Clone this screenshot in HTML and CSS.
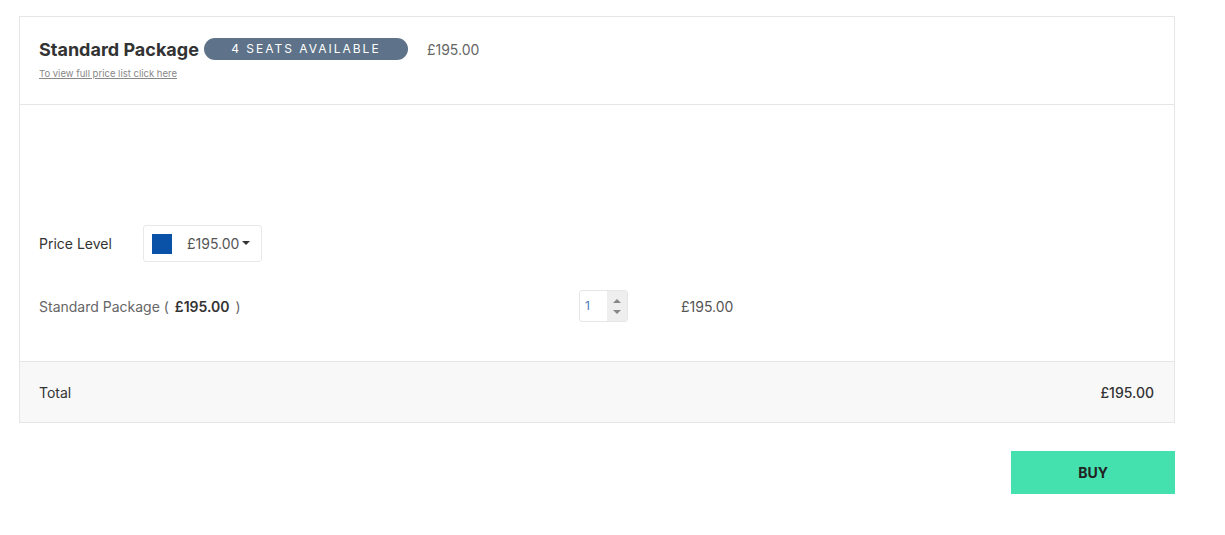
FILE: index.html
```html
<!DOCTYPE html>
<html lang="en">
<head>
  <meta charset="UTF-8" />
  <meta name="viewport" content="width=device-width, initial-scale=1.0" />
  <title>Standard Package</title>
  <link rel="stylesheet" href="styles.css">
</head>
<body>
  <div class="wrap">
    <div class="ticket-box">
      <div class="ticket-head">
        <div class="head-row">
          <h2>Standard Package</h2>
          <span class="badge">4 SEATS AVAILABLE</span>
          <span class="head-price">£195.00</span>
        </div>
        <a href="#" class="price-link">To view full price list click here</a>
      </div>

      <div class="ticket-body">
        <div class="level-row">
          <span class="level-label">Price Level</span>
          <div class="level-select">
            <span class="swatch"></span>
            <span class="level-value">£195.00</span>
            <span class="caret"></span>
          </div>
        </div>

        <div class="item-row">
          <div class="item-name">Standard Package ( <b>£195.00</b> )</div>
          <div class="qty">
            <span class="qty-value">1</span>
            <span class="qty-spin">
              <span class="up"></span>
              <span class="down"></span>
            </span>
          </div>
          <div class="item-price">£195.00</div>
        </div>
      </div>

      <div class="ticket-total">
        <span>Total</span>
        <span class="total-price">£195.00</span>
      </div>
    </div>

    <div class="actions">
      <button type="button">BUY</button>
    </div>
  </div>
</body>
</html>
```

FILE: styles.css
```css
* {
  margin: 0;
  padding: 0;
  box-sizing: border-box;
  font-family: 'Inter', 'Liberation Sans', sans-serif;
}

body {
  background: #fff;
  color: #333;
}

.wrap {
  width: 1175px;
  padding: 16px 0 0 19px;
}

.ticket-box {
  border: 1px solid #e6e6e6;
}

.ticket-head {
  height: 88px;
  padding: 21px 19px 0;
  border-bottom: 1px solid #e6e6e6;
}

.head-row {
  display: flex;
  align-items: center;
  height: 22px;
}

.head-row h2 {
  font-size: 18px;
  font-weight: 700;
  color: #333;
  margin-right: 5px;
}

.badge {
  display: inline-block;
  width: 204px;
  height: 22px;
  line-height: 22px;
  text-align: center;
  background: #5e7389;
  color: #fff;
  border-radius: 11px;
  font-size: 12px;
  letter-spacing: 2px;
}

.head-price {
  margin-left: 19px;
  font-size: 14px;
  color: #666;
}

.price-link {
  display: inline-block;
  margin-top: 8px;
  font-size: 9.5px;
  color: #888;
  text-decoration: underline;
}

.ticket-body {
  height: 256px;
  padding: 120px 19px 0;
}

.level-row {
  display: flex;
  align-items: center;
}

.level-label {
  width: 104px;
  font-size: 14px;
  color: #333;
}

.level-select {
  display: flex;
  align-items: center;
  width: 119px;
  height: 37px;
  padding: 0 8px;
  border: 1px solid #e8e8e8;
  border-radius: 3px;
}

.swatch {
  width: 20px;
  height: 20px;
  background: #0a51a8;
}

.level-value {
  margin-left: 15px;
  font-size: 14px;
  color: #555;
}

.caret {
  margin-left: 3px;
  margin-bottom: 2px;
  border-left: 4px solid transparent;
  border-right: 4px solid transparent;
  border-top: 4px solid #333;
}

.item-row {
  display: flex;
  align-items: center;
  margin-top: 28px;
}

.item-name {
  width: 540px;
  font-size: 14px;
  color: #666;
}

.item-name b {
  font-weight: 600;
  color: #333;
  margin: 0 2px;
}

.qty {
  display: flex;
  width: 49px;
  height: 32px;
  border: 1px solid #e6e6e6;
  border-radius: 3px;
  overflow: hidden;
}

.qty-value {
  flex: 1;
  padding: 7px 0 0 5px;
  font-size: 12px;
  color: #4a7ab8;
}

.qty-spin {
  display: flex;
  flex-direction: column;
  justify-content: space-around;
  align-items: center;
  width: 20px;
  background: #eee;
  padding: 4px 0;
}

.qty-spin .up {
  border-left: 4px solid transparent;
  border-right: 4px solid transparent;
  border-bottom: 4px solid #888;
}

.qty-spin .down {
  border-left: 4px solid transparent;
  border-right: 4px solid transparent;
  border-top: 4px solid #888;
}

.item-price {
  margin-left: 53px;
  font-size: 14px;
  color: #555;
}

.ticket-total {
  display: flex;
  justify-content: space-between;
  align-items: center;
  height: 61px;
  padding: 0 20px 0 19px;
  background: #f8f8f8;
  border-top: 1px solid #e6e6e6;
  font-size: 14px;
  color: #333;
}

.total-price {
  font-weight: 500;
}

.actions {
  display: flex;
  justify-content: flex-end;
  margin-top: 28px;
}

button {
  width: 164px;
  height: 43px;
  background: #44e0ae;
  color: #222;
  border: none;
  font-size: 14px;
  font-weight: 700;
  cursor: pointer;
}
```
